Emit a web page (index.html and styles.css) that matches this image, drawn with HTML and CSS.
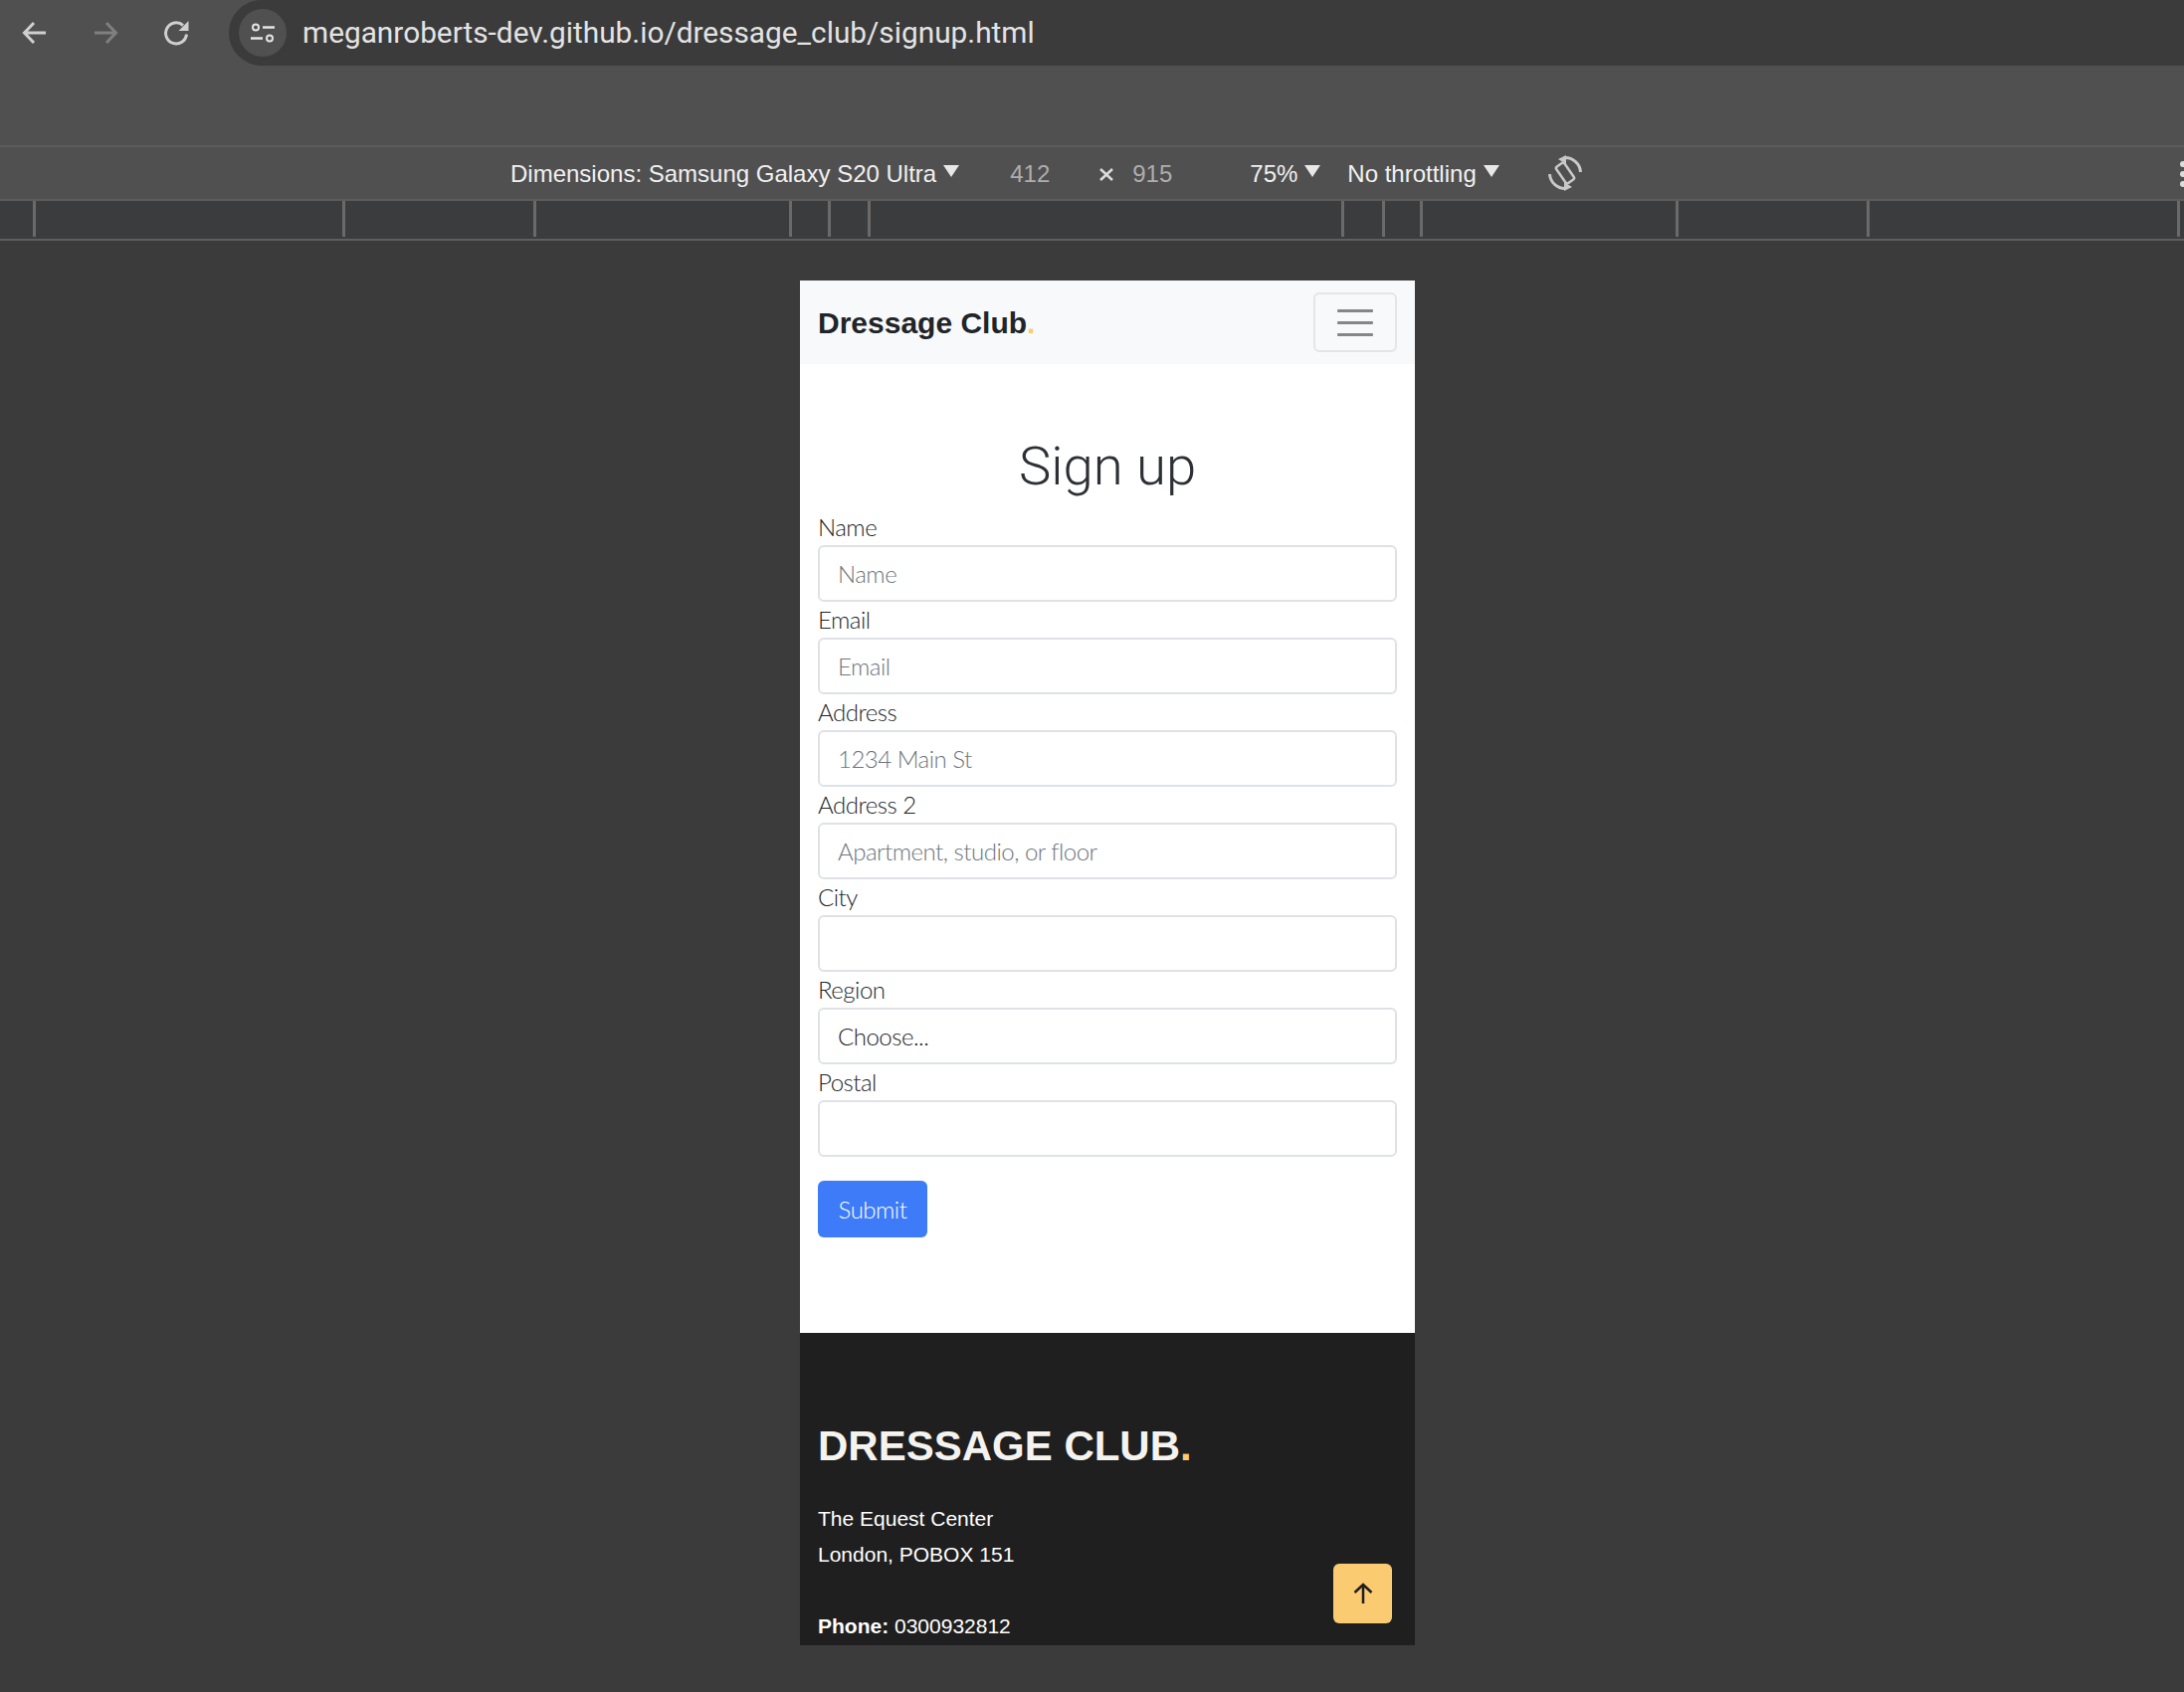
FILE: index.html
```html
<!DOCTYPE html>
<html>
<head>
    <title>Dressage Club - Sign up</title>
    <link rel="stylesheet" href="styles.css">
</head>
<body>
    <div class="topbar">
        <div class="nav-icons">
            <svg class="nav-icon" width="26" height="26" viewBox="0 0 26 26"><path d="M24 13H3M12 3L2.500 13l9.500 10" fill="none" stroke="#cfcfcf" stroke-width="3"/></svg>
            <svg class="nav-icon" width="26" height="26" viewBox="0 0 26 26"><path d="M2 13h21M14 3l9.500 10L14 23" fill="none" stroke="#7f7f7f" stroke-width="3"/></svg>
            <svg class="nav-icon" width="28" height="28" viewBox="0 0 28 28"><path d="M23.500 15.500A10.500 10.500 0 1 1 20 6.500" fill="none" stroke="#cfcfcf" stroke-width="3"/><path d="M25.500 2v10h-10z" fill="#cfcfcf"/></svg>
        </div>
        <div class="address">
            <div class="site-icon">
                <svg width="24" height="20" viewBox="0 0 24 20"><circle cx="5" cy="4.500" r="3" fill="none" stroke="#e3e3e3" stroke-width="2"/><path d="M12 4.500h12M0 15.500h12" stroke="#e3e3e3" stroke-width="2.500"/><circle cx="19" cy="15.500" r="3" fill="none" stroke="#e3e3e3" stroke-width="2"/></svg>
            </div>
            <span class="url">meganroberts-dev.github.io/dressage_club/signup.html</span>
        </div>
    </div>
    <div class="infobar"></div>
    <div class="device-toolbar">
        <span class="dim-label">Dimensions: Samsung Galaxy S20 Ultra</span>
        <span class="caret"></span>
        <span class="dim-num num-w">412</span>
        <svg class="times" width="16" height="16" viewBox="0 0 16 16"><path d="M2 3l12 11M14 3L2 14" stroke="#dcdcdc" stroke-width="2.500"/></svg>
        <span class="dim-num num-h">915</span>
        <span class="zoom-label">75%</span>
        <span class="caret"></span>
        <span class="throttle-label">No throttling</span>
        <span class="caret"></span>
        <svg class="rotate" width="36" height="36" viewBox="0 0 36 36">
            <rect x="13" y="8" width="10" height="20" rx="2" transform="rotate(-35 18 18)" fill="none" stroke="#c8c8c8" stroke-width="2.500"/>
            <path d="M17 2.500A15.500 15.500 0 0 1 33.500 17" fill="none" stroke="#c8c8c8" stroke-width="3"/>
            <path d="M19 33.500A15.500 15.500 0 0 1 2.500 19" fill="none" stroke="#c8c8c8" stroke-width="3"/>
            <path d="M11 4l8-4v9zM25 32l-8 4v-9z" fill="#c8c8c8"/>
        </svg>
        <span class="more"><i></i><i></i><i></i></span>
    </div>
    <div class="ruler">
        <span class="seg s34"></span><span class="seg s311"></span><span class="seg s192"></span><span class="seg s257"></span><span class="seg s39"></span><span class="seg s40"></span><span class="seg s476"></span><span class="seg s41"></span><span class="seg s38"></span><span class="seg s257"></span><span class="seg s192"></span><span class="seg s312"></span>
    </div>

    <div class="device">
        <nav class="navbar">
            <a class="brand">Dressage Club<span class="dot">.</span></a>
            <button class="toggler"><i></i><i></i><i></i></button>
        </nav>
        <main class="content">
            <h1>Sign up</h1>
            <form>
                <label>Name</label>
                <input type="text" placeholder="Name">
                <label>Email</label>
                <input type="email" placeholder="Email">
                <label>Address</label>
                <input type="text" placeholder="1234 Main St">
                <label>Address 2</label>
                <input type="text" placeholder="Apartment, studio, or floor">
                <label>City</label>
                <input type="text">
                <label>Region</label>
                <select><option>Choose...</option></select>
                <label>Postal</label>
                <input type="text">
                <button class="submit" type="submit">Submit</button>
            </form>
        </main>
        <footer class="footer">
            <h3>DRESSAGE CLUB<span class="dot">.</span></h3>
            <p>The Equest Center</p>
            <p>London, POBOX 151</p>
            <p class="gap"><strong>Phone:</strong> 0300932812</p>
        </footer>
        <a class="to-top">
            <svg width="22" height="22" viewBox="0 0 22 22"><path d="M11 21V2M2.500 10L11 2l8.500 8" fill="none" stroke="#1f1f1f" stroke-width="2.500"/></svg>
        </a>
    </div>
</body>
</html>
```

FILE: styles.css
```css
html, body { margin: 0; height: 1701px; overflow: hidden; }
body { background: #3b3b3b; font-family: "Liberation Sans", Arial, sans-serif; }

.topbar { display: flex; height: 66px; background: #505050; }
.nav-icons { display: flex; align-items: center; width: 230px; padding-left: 22px; box-sizing: border-box; }
.nav-icon { display: block; }
.nav-icon:nth-child(2) { margin-left: 45px; }
.nav-icon:nth-child(3) { margin-left: 45px; }
.address { flex: 1; display: flex; align-items: center; background: #3b3b3b; border-radius: 33px 0 0 33px; padding-left: 10px; }
.site-icon { width: 48px; height: 48px; border-radius: 50%; background: #505050; display: flex; align-items: center; justify-content: center; }
.url { margin: -2px 0 0 16px; color: #e3e3e3; font: 29.800px Roboto, sans-serif; }

.infobar { height: 80px; background: #505050; }

.device-toolbar { display: flex; align-items: center; height: 54px; box-sizing: border-box; border-top: 2px solid #5c5c5c; padding-top: 2px; background: #505050; color: #f0f0f0; font-size: 24px; padding-left: 513px; white-space: nowrap; }
.caret { width: 0; height: 0; border-left: 8px solid transparent; border-right: 8px solid transparent; border-top: 12px solid #e8e8e8; margin: -6px 0 0 7px; }
.dim-num { color: #adadad; }
.num-w { margin-left: 51px; }
.times { margin-left: 49px; }
.num-h { margin-left: 18px; }
.zoom-label { margin-left: 78px; }
.throttle-label { margin-left: 27px; }
.rotate { margin-left: 48px; margin-top: -3px; }
.more { margin-left: auto; display: flex; flex-direction: column; gap: 4px; margin-right: -2px; }
.more i { display: block; width: 6px; height: 6px; border-radius: 50%; background: #dcdcdc; }

.ruler { display: flex; height: 36px; padding-bottom: 2px; background: #3b3c3e; border-top: 2px solid #5c5c5c; border-bottom: 2px solid #5f5f5f; }
.seg { box-sizing: border-box; border-right: 3px solid #6a6a6a; }
.s34 { width: 36px; }
.s311 { width: 311px; }
.s312 { width: 312px; }
.s192 { width: 192px; }
.s257 { width: 257px; }
.s38 { width: 38px; }
.s39 { width: 39px; }
.s40 { width: 40px; }
.s41 { width: 41px; }
.s476 { width: 476px; }

.device { position: relative; width: 618px; height: 1372px; margin: 40px 0 0 804px; overflow: hidden; background: #fff; }

.navbar { display: flex; align-items: center; justify-content: space-between; height: 84px; box-sizing: border-box; padding: 0 18px; background: #f8f9fa; }
.brand { color: #212529; font-size: 30px; font-weight: 700; margin-top: 2px; }
.dot { color: #fbcb72; }
.toggler { display: flex; flex-direction: column; justify-content: center; align-items: center; gap: 9px; width: 84px; height: 60px; padding: 0; background: transparent; border: 2px solid #e4e5e6; border-radius: 6px; }
.toggler i { display: block; width: 36px; height: 3px; border-radius: 1px; background: #858688; }

.content { height: 974px; box-sizing: border-box; padding: 0 18px; color: #212529; font-family: Lato, sans-serif; font-size: 24px; }
h1 { margin: 0; padding-top: 71px; height: 146px; box-sizing: border-box; text-align: center; font: 300 54.500px/62px Roboto, sans-serif; color: #2d3136; }
label { display: block; height: 36px; line-height: 36px; font-weight: 300; letter-spacing: -0.5px; }
input, select { display: block; width: 100%; height: 57px; box-sizing: border-box; padding: 0 18px; border: 2px solid #dee2e6; border-radius: 6px; background: #fff; color: #212529; font-family: Lato, sans-serif; font-size: 24px; font-weight: 300; letter-spacing: -0.5px; appearance: none; outline: none; }
input::placeholder { color: #6c757d; opacity: 1; }
.submit { display: block; margin-top: 24px; width: 110px; height: 57px; padding: 0; border: none; border-radius: 6px; background: #3d7bf8; color: #fff; font-family: Lato, sans-serif; font-size: 24px; font-weight: 300; letter-spacing: -0.5px; }

.footer { height: 314px; box-sizing: border-box; padding: 89px 18px 0; background: #1f1f1f; color: #fff; overflow: hidden; }
.footer h3 { margin: 0 0 30px; font-size: 42px; line-height: 50px; font-weight: 700; color: #f4f3ef; }
.footer p { margin: 0; font-size: 21px; line-height: 36px; }
.footer .gap { margin-top: 36px; }
.to-top { position: absolute; right: 23px; bottom: 22px; display: flex; align-items: center; justify-content: center; width: 59px; height: 60px; border-radius: 6px; background: #fbcb72; }
```
